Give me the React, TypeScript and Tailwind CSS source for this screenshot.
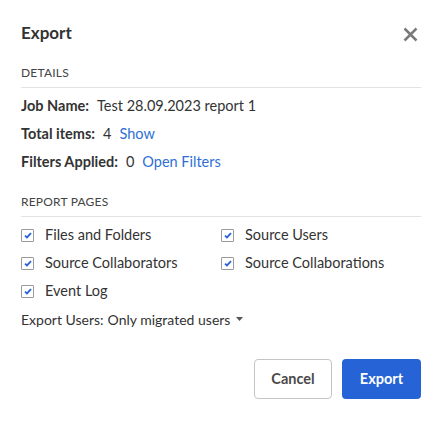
import React from "react";

function Check({ label }: { label: string }) {
  return (
    <label className="flex items-center h-[28px] gap-[11px] text-[14.5px] text-[#333]">
      <span className="w-[13px] h-[13px] border border-[#9a9a9a] rounded-[1px] flex items-center justify-center bg-white">
        <svg width="8" height="7" viewBox="0 0 8 7">
          <path d="M1 3.6 L3 5.4 L7 1.2" fill="none" stroke="#2563d6" strokeWidth="1.8" />
        </svg>
      </span>
      <span>{label}</span>
    </label>
  );
}

export default function App() {
  return (
    <div className="w-[446px] h-[421px] bg-white pl-[21px] pr-[25px]" style={{ fontFamily: "Lato, 'Noto Sans', sans-serif" }}>
      <div className="flex items-center justify-between h-[34px] pt-[16px] box-content">
        <h1 className="text-[17px] font-bold text-[#333]">Export</h1>
        <svg width="15" height="15" viewBox="0 0 15 15" className="mr-[3px] mt-[3px]">
          <path d="M1.5 1.5 L13.5 13.5 M13.5 1.5 L1.5 13.5" stroke="#7a7a7a" strokeWidth="2.5" />
        </svg>
      </div>
      <div className="mt-[15px] text-[12px] text-[#444] tracking-[0.2px] h-[16px] leading-[16px]">DETAILS</div>
      <div className="mt-[6px] border-t border-[#e3e3e3]" />
      <div className="mt-[4px] flex flex-col text-[14.5px] text-[#333]">
        <div className="h-[28px] flex items-center gap-[8px]">
          <span className="font-bold">Job Name:</span>
          <span>Test 28.09.2023 report 1</span>
        </div>
        <div className="h-[28px] flex items-center gap-[8px]">
          <span className="font-bold">Total items:</span>
          <span>4</span>
          <span className="text-[#2f6fd6]">Show</span>
        </div>
        <div className="h-[28px] flex items-center gap-[8px]">
          <span className="font-bold">Filters Applied:</span>
          <span>0</span>
          <span className="text-[#2f6fd6]">Open Filters</span>
        </div>
      </div>
      <div className="mt-[18px] text-[12px] text-[#444] tracking-[0.2px] h-[16px] leading-[16px]">REPORT PAGES</div>
      <div className="mt-[6px] border-t border-[#e3e3e3]" />
      <div className="mt-[4px] grid grid-cols-[200px_200px]">
        <Check label="Files and Folders" />
        <Check label="Source Users" />
        <Check label="Source Collaborators" />
        <Check label="Source Collaborations" />
        <Check label="Event Log" />
      </div>
      <div className="h-[28px] flex items-center text-[14px] text-[#333]">
        <span>Export Users:</span>
        <span className="ml-[4px]">Only migrated users</span>
        <svg width="7" height="4" viewBox="0 0 7 4" className="ml-[6px]">
          <path d="M0 0 L7 0 L3.5 4 Z" fill="#555" />
        </svg>
      </div>
      <div className="mt-[26px] flex justify-end gap-[10px]">
        <button className="w-[78px] h-[40px] border border-[#c4c4c4] rounded-[4px] bg-white text-[14.5px] font-bold text-[#4a4a4a]">Cancel</button>
        <button className="w-[79px] h-[40px] rounded-[4px] bg-[#2563d6] text-[14.5px] font-bold text-white">Export</button>
      </div>
    </div>
  );
}
